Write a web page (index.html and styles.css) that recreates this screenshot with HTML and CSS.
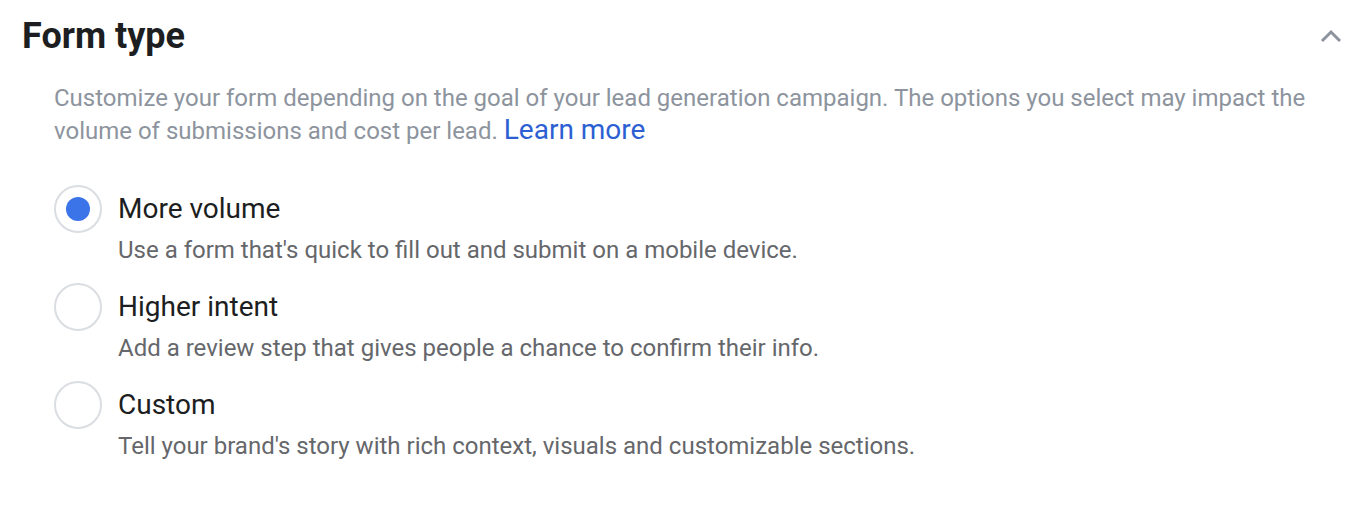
FILE: index.html
```html
<!DOCTYPE html>
<html>
<head>
<meta charset="utf-8">
<link rel="stylesheet" href="styles.css">
</head>
<body>
<section class="panel">
  <header class="head">
    <h1 class="title">Form type</h1>
    <svg class="chev" width="22" height="14" viewBox="0 0 22 14"><path d="M2 12 L11 3 L20 12" fill="none" stroke="#8d949e" stroke-width="3" stroke-linecap="butt"/></svg>
  </header>
  <div class="body">
    <p class="intro">Customize your form depending on the goal of your lead generation campaign. The options you select may impact the volume of submissions and cost per lead. <a class="link">Learn more</a></p>
    <div class="options">
      <div class="opt">
        <span class="radio on"><span class="dot"></span></span>
        <div class="txt">
          <div class="label">More volume</div>
          <div class="desc">Use a form that's quick to fill out and submit on a mobile device.</div>
        </div>
      </div>
      <div class="opt">
        <span class="radio"></span>
        <div class="txt">
          <div class="label">Higher intent</div>
          <div class="desc">Add a review step that gives people a chance to confirm their info.</div>
        </div>
      </div>
      <div class="opt">
        <span class="radio"></span>
        <div class="txt">
          <div class="label">Custom</div>
          <div class="desc">Tell your brand's story with rich context, visuals and customizable sections.</div>
        </div>
      </div>
    </div>
  </div>
</section>
</body>
</html>
```
FILE: styles.css
```css
* { box-sizing: border-box; }
body { margin: 0; background: #fff; font-family: Roboto, "Liberation Sans", sans-serif; }
.panel { padding: 14px 16px 0 22px; }
.head { display: flex; justify-content: space-between; align-items: center; height: 44px; }
.title { margin: 0; font-size: 36px; line-height: 44px; font-weight: 700; color: #1c1e21; }
.body { padding-left: 32px; }
.intro { margin: 24px 0 0; font-size: 24px; line-height: 33px; color: #8d949e; max-width: 1270px; }
.link { color: #2d5fd3; font-size: 28px; line-height: 1; }
.options { margin-top: 37px; display: flex; flex-direction: column; gap: 16px; }
.opt { display: flex; align-items: flex-start; gap: 16px; }
.radio { width: 48px; height: 48px; border: 2px solid #dadde1; border-radius: 50%; display: flex; align-items: center; justify-content: center; flex: none; }
.dot { width: 24px; height: 24px; border-radius: 50%; background: #3b74e8; }
.label { font-size: 28px; line-height: 48px; color: #1c1e21; }
.desc { font-size: 24px; line-height: 34px; color: #65676b; }
```
